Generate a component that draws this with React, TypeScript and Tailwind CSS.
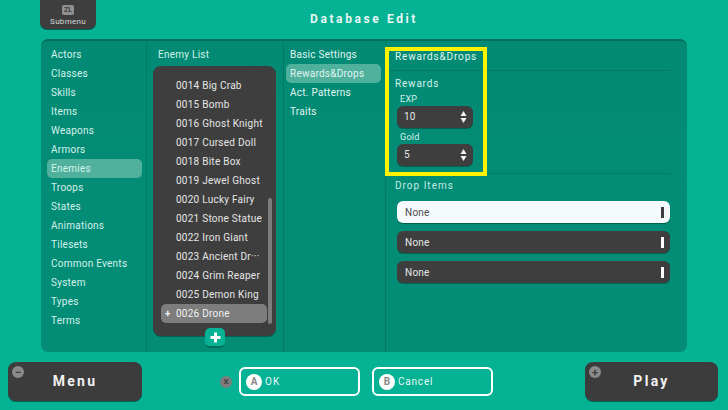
const sections = ['Actors', 'Classes', 'Skills', 'Items', 'Weapons', 'Armors', 'Enemies', 'Troops', 'States', 'Animations', 'Tilesets', 'Common Events', 'System', 'Types', 'Terms']
const enemies = ['0014 Big Crab', '0015 Bomb', '0016 Ghost Knight', '0017 Cursed Doll', '0018 Bite Box', '0019 Jewel Ghost', '0020 Lucky Fairy', '0021 Stone Statue', '0022 Iron Giant', '0023 Ancient Dr···', '0024 Grim Reaper', '0025 Demon King']
const tabs = ['Basic Settings', 'Rewards&Drops', 'Act. Patterns', 'Traits']

function Spinner({ label, value }: { label: string; value: string }) {
  return (
    <div className="pl-[2px]">
      <p className="h-[16px] pl-[3px] text-[9px] leading-[18px] tracking-[0.3px] text-[#d5f2ea]">{label}</p>
      <div className="flex h-[22px] w-[76px] items-center justify-between rounded-[6px] bg-[#3e3e3e] pb-[1px] pl-[7px] pr-[6px] text-[10px] tracking-[0.25px] text-[#e6e6e6] shadow-[0_1px_0_#03614f]">
        <span>{value}</span>
        <svg width="7" height="14" viewBox="0 0 7 14" fill="#f2f2f2">
          <path d="M3.5 1 L6.5 6 H0.5 Z" />
          <path d="M3.5 13 L6.5 8 H0.5 Z" />
        </svg>
      </div>
    </div>
  )
}

function DropRow({ active }: { active?: boolean }) {
  return (
    <div className={`flex h-[22px] w-[273px] items-center justify-between rounded-[6px] pl-[8px] pr-[6px] text-[10px] tracking-[0.25px] shadow-[0_1px_0_#03614f] ${active ? 'bg-[#f5fafc] text-[#4a4a4a]' : 'bg-[#3e3e3e] text-[#e6e6e6]'}`}>
      <span>None</span>
      <span className={`h-[11px] w-[3px] ${active ? 'bg-[#3e3e3e]' : 'bg-white'}`} />
    </div>
  )
}

function PadKey({ letter }: { letter: string }) {
  return (
    <span className="flex h-[16px] w-[16px] items-center justify-center rounded-full bg-white text-[10px] font-bold tracking-normal text-[#8a8a8a]">{letter}</span>
  )
}

function BigButton({ label, glyph, className }: { label: string; glyph: string; className?: string }) {
  return (
    <div className={`relative flex h-[39px] items-center justify-center rounded-[8px] bg-[#3c3c3c] text-[14px] font-bold tracking-[2.3px] text-[#f2f2f2] shadow-[0_1px_0_#03614f] ${className ?? ''}`}>
      {label}
      <span className="absolute left-[4px] top-[4px] flex h-[12px] w-[12px] items-center justify-center rounded-full bg-[#8a8a8a] text-[11px] font-bold leading-none tracking-normal text-[#3c3c3c]">{glyph}</span>
    </div>
  )
}

export default function App() {
  return (
    <div className="relative flex h-[410px] w-[728px] flex-col overflow-hidden bg-[#05b294] font-['Roboto',sans-serif]">
      {/* Header */}
      <div className="grid h-[39px] grid-cols-[1fr_auto_1fr]">
        <div className="pl-[40px]">
          <div className="flex h-[29px] w-[56px] flex-col items-center justify-end rounded-b-[7px] bg-[#3e3e3e] pb-[3px] shadow-[0_1px_0_#03614f]">
            <span className="flex h-[10px] w-[12px] items-center justify-center rounded-[2px] bg-[#8f8f8f] text-[7px] font-bold leading-none text-[#3e3e3e]">ZL</span>
            <span className="mt-[2px] text-[8px] leading-[9px] tracking-[0.3px] text-[#d8d8d8]">Submenu</span>
          </div>
        </div>
        <h1 className="pt-[10px] text-[12px] font-bold leading-[18px] tracking-[2.6px] text-[#e8f8f4]">Database Edit</h1>
        <div />
      </div>

      {/* Main panel */}
      <div className="ml-[41px] flex h-[313px] w-[646px] rounded-[7px] border-t-2 border-[#03705d] bg-gradient-to-b from-[#028a74] to-[#038d77]">
        <nav className="flex w-[106px] flex-col border-r border-[#037a66] pl-[6px] pt-[4px]">
          {sections.map((name) => (
            <div key={name} className={`flex h-[19px] w-[95px] items-center rounded-[5px] pl-[4px] text-[10px] tracking-[0.25px] text-[#d5f2ea] ${name === 'Enemies' ? 'bg-[#4fb09c]' : ''}`}>
              {name}
            </div>
          ))}
        </nav>

        <section className="flex w-[137px] flex-col border-r border-[#037a66] pl-[6px] pt-[4px]">
          <p className="h-[19px] pl-[5px] text-[10px] leading-[19px] tracking-[0.25px] text-[#d5f2ea]">Enemy List</p>
          <div className="relative mt-[2px] h-[270px] w-[123px] rounded-[8px] bg-[#3e3e3e] pl-[8px] pt-[10px] shadow-[0_1px_0_#03614f]">
            {enemies.map((name) => (
              <div key={name} className="flex h-[19px] items-center pl-[15px] text-[10px] tracking-[0.25px] text-[#e6e6e6]">{name}</div>
            ))}
            <div className="flex h-[19px] w-[106px] items-center rounded-[5px] bg-[#7d7d7d] pl-[4px] text-[10px] tracking-[0.25px] text-[#f2f2f2]">
              <span className="w-[11px] font-bold">+</span>0026 Drone
            </div>
            <span className="absolute right-[4px] top-[132px] h-[126px] w-[4px] rounded-full bg-[#7d7d7d]" />
            <span className="absolute left-[52px] top-[262px] flex h-[20px] w-[20px] items-center justify-center rounded-[5px] border-b-2 border-[#03705d] bg-[#05b294]">
              <svg width="11" height="11" viewBox="0 0 11 11" fill="#fff">
                <path d="M4 0.5 H7 V4 H10.5 V7 H7 V10.5 H4 V7 H0.5 V4 H4 Z" />
              </svg>
            </span>
          </div>
        </section>

        <section className="flex w-[102px] flex-col border-r border-[#037a66] pl-[2px] pt-[4px]">
          {tabs.map((name) => (
            <div key={name} className={`flex h-[19px] w-[95px] items-center rounded-[5px] pl-[4px] text-[10px] tracking-[0.25px] text-[#e0f5f0] ${name === 'Rewards&Drops' ? 'bg-[#4fb09c]' : ''}`}>
              {name}
            </div>
          ))}
        </section>

        <section className="flex flex-1 flex-col pr-[16px]">
          <p className="mt-[8px] h-[22px] border-b border-[#037a66] pl-[9px] text-[10px] leading-[16px] tracking-[0.85px] text-[#e0f5f0]">Rewards&amp;Drops</p>
          <div className="pl-[9px]">
            <p className="mt-[6px] h-[13px] text-[10px] leading-[14px] tracking-[0.8px] text-[#d5f2ea]">Rewards</p>
            <Spinner label="EXP" value="10" />
            <Spinner label="Gold" value="5" />
          </div>
          <div className="mt-[7px] border-t border-[#037a66] pl-[9px] pt-[5px]">
            <p className="h-[14px] text-[10px] leading-[14px] tracking-[1px] text-[#c3ebe1]">Drop Items</p>
            <div className="mt-[8px] flex flex-col gap-[8px] pl-[2px]">
              <DropRow active />
              <DropRow />
              <DropRow />
            </div>
          </div>
        </section>
      </div>

      {/* Bottom bar */}
      <div className="mt-[10px] flex items-start pl-[8px] pr-[10px]">
        <BigButton label="Menu" glyph="−" className="w-[134px]" />
        <div className="ml-[78px] flex items-center pt-[5px]">
          <span className="mr-[7px] flex h-[12px] w-[12px] items-center justify-center rounded-full bg-[#7d7d7d] text-[8px] font-bold leading-none text-[#3c3c3c]">X</span>
          <div className="flex h-[29px] w-[121px] items-center gap-[3px] rounded-[6px] border-2 border-white pl-[5px] text-[10px] tracking-[1px] text-[#e6f8f4]">
            <PadKey letter="A" />OK
          </div>
          <div className="ml-[12px] flex h-[29px] w-[121px] items-center gap-[3px] rounded-[6px] border-2 border-white pl-[5px] text-[10px] tracking-[0.8px] text-[#e6f8f4]">
            <PadKey letter="B" />Cancel
          </div>
        </div>
        <BigButton label="Play" glyph="+" className="ml-auto w-[133px]" />
      </div>

      {/* Tutorial highlight */}
      <div className="absolute left-[385px] top-[47px] h-[129px] w-[102px] border-4 border-[#fff200]" />
    </div>
  )
}
